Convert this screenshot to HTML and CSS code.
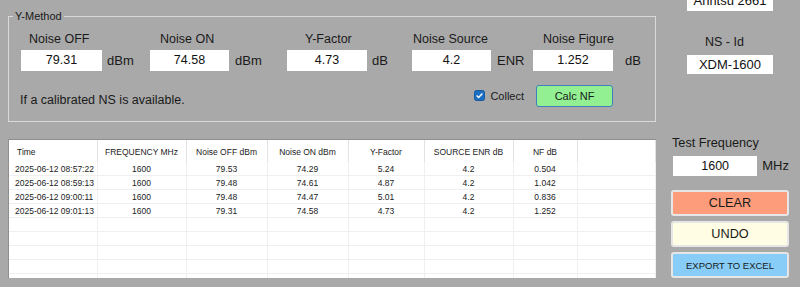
FILE: index.html
```html
<!DOCTYPE html>
<html>
  <head>
    <meta charset="utf-8" />
    <title>Noise Figure - Y-Method</title>
    <link rel="stylesheet" href="styles.css">
  </head>

  <body>
    <div class="form">
      <!-- 왼쪽: 측정 그룹 + 결과 리스트 -->
      <div class="left">
        <fieldset class="group">
          <legend>Y-Method</legend>
          <div class="fields">
            <span class="lbl l1">Noise OFF</span>
            <span class="lbl l2">Noise ON</span>
            <span class="lbl l3">Y-Factor</span>
            <span class="lbl l4">Noise Source</span>
            <span class="lbl l5">Noise Figure</span>

            <span class="box">79.31</span>
            <span class="unit u1">dBm</span>
            <span class="box">74.58</span>
            <span class="unit u2">dBm</span>
            <span class="box">4.73</span>
            <span class="unit u3">dB</span>
            <span class="box">4.2</span>
            <span class="unit u4">ENR</span>
            <span class="box">1.252</span>
            <span class="unit u5">dB</span>
          </div>
          <div class="actions">
            <span class="note">If a calibrated NS is available.</span>
            <label class="collect">
              <svg width="11" height="11" viewBox="0 0 11 11">
                <rect x="0.5" y="0.5" width="10" height="10" rx="2" fill="#1b6ec2" stroke="#155a9f" />
                <path d="M2.6 5.6 L4.6 7.5 L8.4 3.4" fill="none" stroke="#fff" stroke-width="1.4" />
              </svg>
              Collect
            </label>
            <button class="btn calc">Calc NF</button>
          </div>
        </fieldset>

        <div class="list">
          <table>
            <colgroup>
              <col style="width:88px" />
              <col style="width:89px" />
              <col style="width:81px" />
              <col style="width:81px" />
              <col style="width:76px" />
              <col style="width:89px" />
              <col style="width:64px" />
              <col />
            </colgroup>
            <thead>
              <tr>
                <th class="first">Time</th>
                <th>FREQUENCY MHz</th>
                <th>Noise OFF dBm</th>
                <th>Noise ON dBm</th>
                <th>Y-Factor</th>
                <th>SOURCE ENR dB</th>
                <th>NF dB</th>
                <th></th>
              </tr>
            </thead>
            <tbody>
              <tr>
                <td class="first">2025-06-12 08:57:22</td>
                <td>1600</td><td>79.53</td><td>74.29</td><td>5.24</td><td>4.2</td><td>0.504</td><td></td>
              </tr>
              <tr>
                <td class="first">2025-06-12 08:59:13</td>
                <td>1600</td><td>79.48</td><td>74.61</td><td>4.87</td><td>4.2</td><td>1.042</td><td></td>
              </tr>
              <tr>
                <td class="first">2025-06-12 09:00:11</td>
                <td>1600</td><td>79.48</td><td>74.47</td><td>5.01</td><td>4.2</td><td>0.836</td><td></td>
              </tr>
              <tr>
                <td class="first">2025-06-12 09:01:13</td>
                <td>1600</td><td>79.31</td><td>74.58</td><td>4.73</td><td>4.2</td><td>1.252</td><td></td>
              </tr>
              <tr class="empty"><td></td><td></td><td></td><td></td><td></td><td></td><td></td><td></td></tr>
              <tr class="empty"><td></td><td></td><td></td><td></td><td></td><td></td><td></td><td></td></tr>
              <tr class="empty"><td></td><td></td><td></td><td></td><td></td><td></td><td></td><td></td></tr>
              <tr class="empty"><td></td><td></td><td></td><td></td><td></td><td></td><td></td><td></td></tr>
              <tr class="empty"><td></td><td></td><td></td><td></td><td></td><td></td><td></td><td></td></tr>
            </tbody>
          </table>
        </div>
      </div>

      <!-- 오른쪽: 장비 정보 + 버튼 -->
      <div class="right">
        <div class="box device">Anritsu 2661</div>
        <div class="ns-label">NS - Id</div>
        <div class="box ns">XDM-1600</div>

        <div class="freq-label">Test Frequency</div>
        <div class="freq">
          <span class="box">1600</span>
          <span class="unit">MHz</span>
        </div>

        <div class="buttons">
          <button class="btn clear">CLEAR</button>
          <button class="btn undo">UNDO</button>
          <button class="btn export">EXPORT TO EXCEL</button>
        </div>
      </div>
    </div>
  </body>
</html>
```

FILE: styles.css
```css
/* 기본 */
body {
  margin: 0;
  width: 800px;
  height: 287px;
  overflow: hidden;
  background: #a9a9a9;
  font-family: "Liberation Sans", Arial, sans-serif;
  color: #1a1a1a;
}

.form {
  display: grid;
  grid-template-columns: 648px 118px;
  column-gap: 15px;
  align-items: start;
  padding-left: 8px;
}

/* 흰색 값 박스 */
.box {
  display: block;
  height: 21px;
  line-height: 21px;
  background: #fff;
  text-align: center;
  font-size: 12.5px;
  color: #111;
}

.unit {
  font-size: 13px;
  line-height: 21px;
}

/* ===== Y-Method 그룹 ===== */
.left {
  padding-top: 10px;
}

.group {
  margin: 0;
  padding: 0;
  border: 1px solid #d9d9d9;
}

.group legend {
  margin-left: 4px;
  padding: 0 2px;
  font-size: 11px;
  line-height: 12px;
}

.fields {
  display: grid;
  grid-template-columns: 81px 48px 79px 58px 80px 45px 79px 42px 80px auto;
  grid-template-rows: 16px 21px;
  row-gap: 3px;
  padding: 9px 12px 0;
}

/* 라벨은 1행, 값/단위는 2행 */
.lbl {
  grid-row: 1;
  font-size: 12.5px;
  line-height: 16px;
  white-space: nowrap;
}

.fields .box,
.fields .unit {
  grid-row: 2;
}

.l1 { grid-column: 1; padding-left: 8px; }
.l2 { grid-column: 3; padding-left: 10px; }
.l3 { grid-column: 5; padding-left: 18px; }
.l4 { grid-column: 7; padding-left: 1px; }
.l5 { grid-column: 9; padding-left: 10px; }

.u1 { padding-left: 5px; }
.u2 { padding-left: 6px; }
.u3 { padding-left: 5px; }
.u4 { padding-left: 6px; }
.u5 { padding-left: 12px; }

.actions {
  display: flex;
  align-items: center;
  margin-top: 13px;
  padding: 0 42px 14px 11px;
}

.note {
  flex: 1;
  font-size: 12.5px;
  padding-top: 9px;
}

.collect {
  display: flex;
  align-items: center;
  gap: 5px;
  margin-right: 12px;
  font-size: 11px;
}

/* 버튼 공통 */
.btn {
  display: block;
  margin: 0;
  padding: 0;
  border: 2px solid #e6e6e6;
  border-radius: 3px;
  font-family: "Liberation Sans", Arial, sans-serif;
  color: #1a1a1a;
}

.calc {
  width: 77px;
  height: 22px;
  border: 1px solid #3f7fbf;
  background: #92ef92;
  font-size: 11px;
}

/* ===== 결과 리스트 ===== */
.list {
  margin-top: 17px;
  height: 139px;
  overflow: hidden;
  background: #fff;
  border-top: 1px solid #8f8f8f;
  border-left: 1px solid #8f8f8f;
  box-sizing: border-box;
}

.list table {
  width: 647px;
  table-layout: fixed;
  border-collapse: collapse;
  font-size: 8.5px;
  color: #222;
}

.list th {
  height: 21px;
  padding: 0;
  font-weight: normal;
  text-align: center;
  border-right: 1px solid #e3e3e3;
  padding-top: 1px;
}

.list td {
  height: 13px;
  padding: 0;
  text-align: center;
  border-right: 1px solid #efefef;
  border-bottom: 1px solid #efefef;
}

.list th.first {
  text-align: left;
  padding-left: 8px;
}

.list td.first {
  text-align: left;
  padding-left: 6px;
}

/* ===== 오른쪽 패널 ===== */
.device {
  width: 86px;
  height: 20px;
  line-height: 20px;
  margin: -9px 0 0 16px;
  font-size: 13px;
}

.ns-label {
  margin-top: 23px;
  padding-left: 34px;
  font-size: 12.5px;
  line-height: 16px;
}

.ns {
  width: 86px;
  height: 19px;
  line-height: 19px;
  margin: 5px 0 0 16px;
  font-size: 13px;
}

.freq-label {
  margin-top: 61px;
  padding-left: 1px;
  font-size: 12.7px;
  line-height: 16px;
}

.freq {
  display: flex;
  align-items: center;
  gap: 5px;
  margin-top: 4px;
  padding-left: 2px;
}

.freq .box {
  width: 87px;
  height: 20px;
  line-height: 20px;
}

.buttons {
  display: flex;
  flex-direction: column;
  gap: 5px;
  margin-top: 14px;
}

.buttons .btn {
  width: 118px;
  height: 26px;
  font-size: 12.7px;
}

.clear { background: #fc9c7a; }
.undo { background: #fffde4; }
.export {
  background: #87cdf8;
  font-size: 9.5px !important;
}
```
